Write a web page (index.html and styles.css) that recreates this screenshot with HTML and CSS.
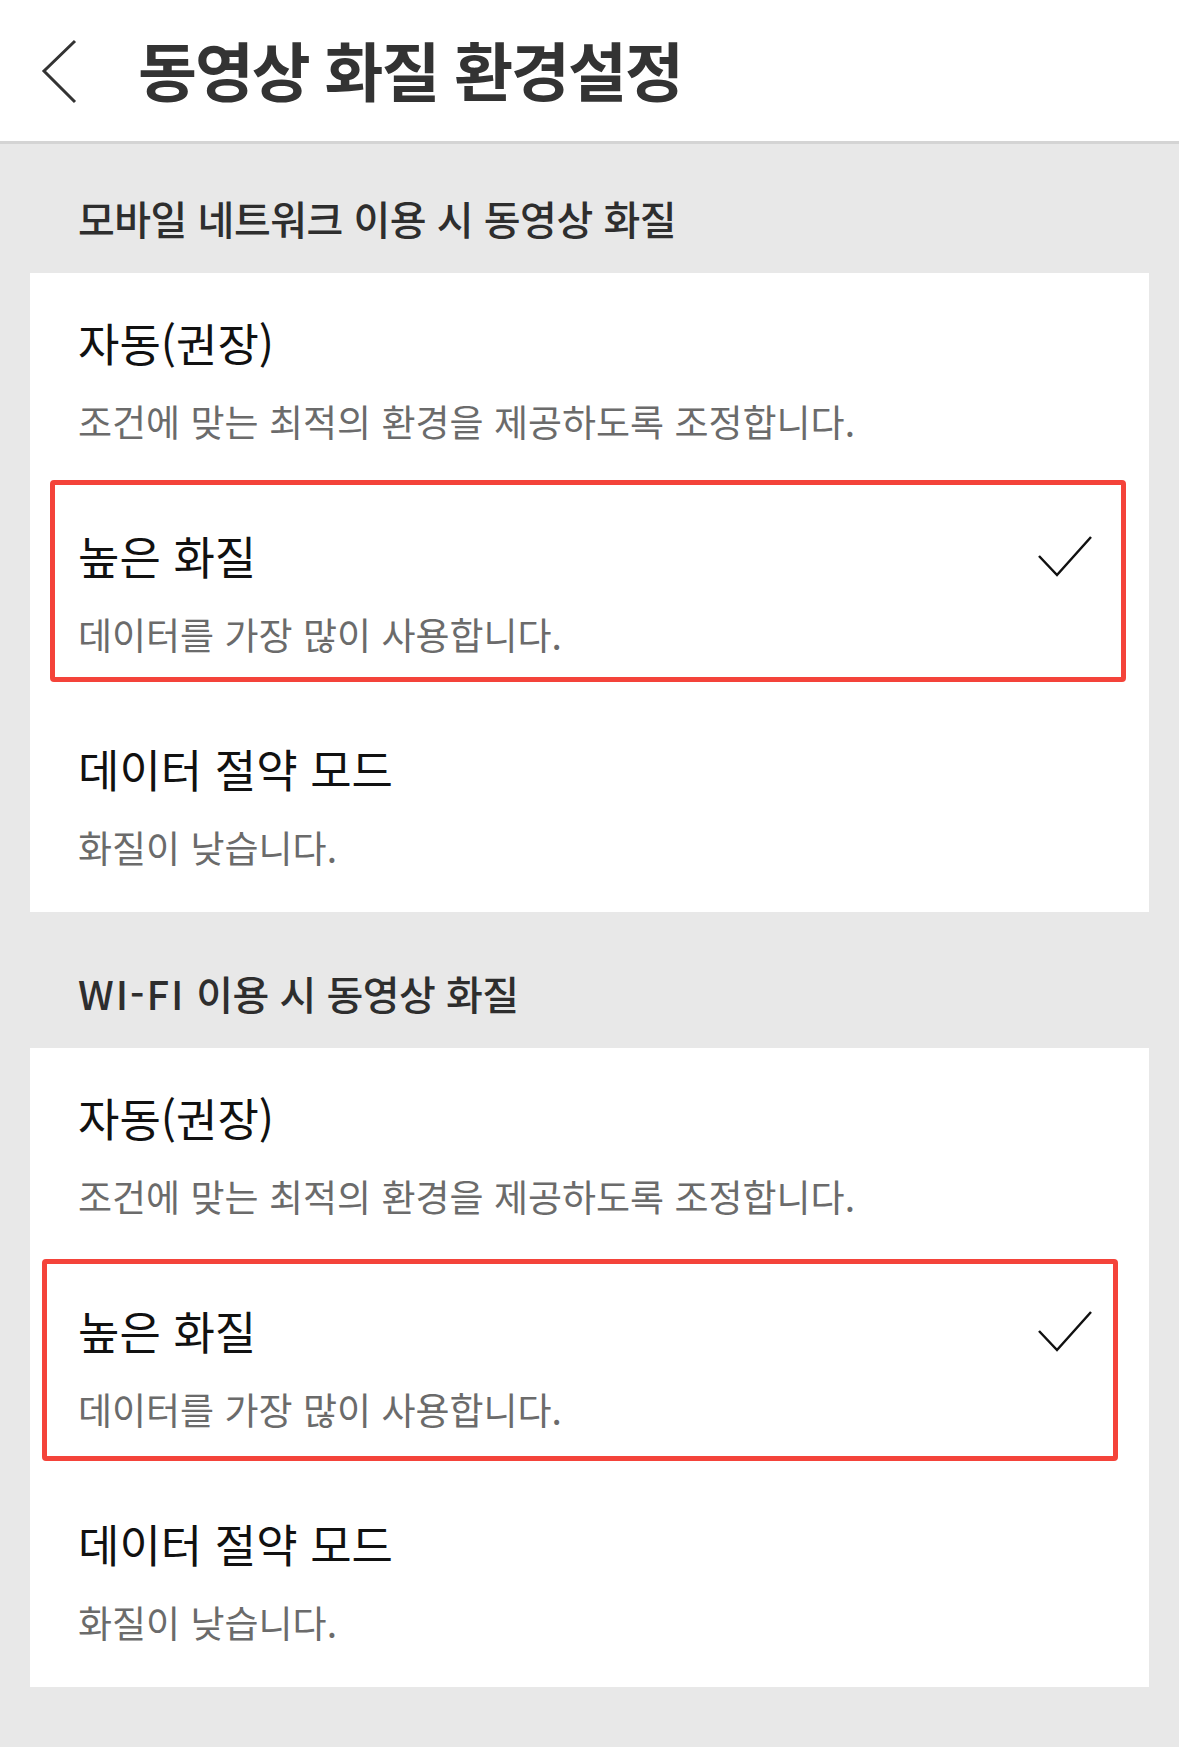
FILE: index.html
```html
<!DOCTYPE html>
<html lang="ko">
<head>
    <meta charset="UTF-8">
    <title>동영상 화질 환경설정</title>
    <link rel="stylesheet" href="styles.css">
</head>
<body>
    <header class="topbar">
        <a class="back" href="#">
            <svg width="40" height="66" viewBox="0 0 40 66">
                <polyline points="35,2 4,32 35,63" fill="none" stroke="#333" stroke-width="3"/>
            </svg>
        </a>
        <h1>동영상 화질 환경설정</h1>
    </header>

    <main>
        <section class="group">
            <h2 class="group-title">모바일 네트워크 이용 시 동영상 화질</h2>
            <ul class="card">
                <li class="row">
                    <div class="row-title">자동(권장)</div>
                    <div class="row-desc">조건에 맞는 최적의 환경을 제공하도록 조정합니다.</div>
                </li>
                <li class="row selected">
                    <div class="row-title">높은 화질</div>
                    <div class="row-desc">데이터를 가장 많이 사용합니다.</div>
                    <svg class="check" width="56" height="42" viewBox="0 0 56 42">
                        <polyline points="2,21 20,40 54,2" fill="none" stroke="#111" stroke-width="2.5"/>
                    </svg>
                    <span class="mark mark-first"></span>
                </li>
                <li class="row">
                    <div class="row-title">데이터 절약 모드</div>
                    <div class="row-desc">화질이 낮습니다.</div>
                </li>
            </ul>
        </section>

        <section class="group group-second">
            <h2 class="group-title"><span class="latin">WI-FI</span> 이용 시 동영상 화질</h2>
            <ul class="card">
                <li class="row">
                    <div class="row-title">자동(권장)</div>
                    <div class="row-desc">조건에 맞는 최적의 환경을 제공하도록 조정합니다.</div>
                </li>
                <li class="row selected">
                    <div class="row-title">높은 화질</div>
                    <div class="row-desc">데이터를 가장 많이 사용합니다.</div>
                    <svg class="check" width="56" height="42" viewBox="0 0 56 42">
                        <polyline points="2,21 20,40 54,2" fill="none" stroke="#111" stroke-width="2.5"/>
                    </svg>
                    <span class="mark mark-second"></span>
                </li>
                <li class="row">
                    <div class="row-title">데이터 절약 모드</div>
                    <div class="row-desc">화질이 낮습니다.</div>
                </li>
            </ul>
        </section>
    </main>
</body>
</html>
```

FILE: styles.css
```css
html, body{
    margin: 0;
    padding: 0;
}

body{
    background: #e8e8e8;
    font-family: "Noto Sans CJK KR", "Noto Sans", sans-serif;
    color: #111;
    min-height: 1747px;
}

.topbar{
    display: flex;
    align-items: center;
    height: 141px;
    padding-left: 40px;
    background: #fff;
    border-bottom: 3px solid #d4d4d4;
}

.back{
    display: flex;
    width: 40px;
    height: 66px;
    margin-top: 2px;
}

.topbar h1{
    margin: 0 0 6px 58px;
    font-size: 64px;
    font-weight: 700;
    letter-spacing: -2px;
    color: #333;
    line-height: 1;
}

.group-title{
    margin: 0;
    padding: 50px 0 31px 78px;
    line-height: 48px;
    font-size: 40px;
    font-weight: 500;
    letter-spacing: -0.5px;
    color: #2e2e2e;
}

.group-title .latin{
    letter-spacing: 2px;
}

.group-second .group-title{
    padding-top: 57px;
}

.card{
    list-style: none;
    margin: 0 30px;
    padding: 0;
    background: #fff;
}

.row{
    position: relative;
    height: 213px;
    box-sizing: border-box;
    padding: 42px 48px 43px 48px;
    display: flex;
    flex-direction: column;
}

.row-title{
    font-size: 45px;
    line-height: 56px;
    color: #111;
}

.row-desc{
    margin-top: 28px;
    font-size: 37px;
    line-height: 44px;
    color: #6b6b6b;
}

.check{
    position: absolute;
    right: 56px;
    top: 49px;
}

/* red highlight boxes drawn over the screenshot */
.mark{
    position: absolute;
    border: 5px solid #f4433a;
    border-radius: 4px;
    box-sizing: border-box;
}

.mark-first{
    left: 20px;
    right: 23px;
    top: -6px;
    height: 202px;
}

.mark-second{
    left: 12px;
    right: 31px;
    top: -2px;
    height: 202px;
}
```
